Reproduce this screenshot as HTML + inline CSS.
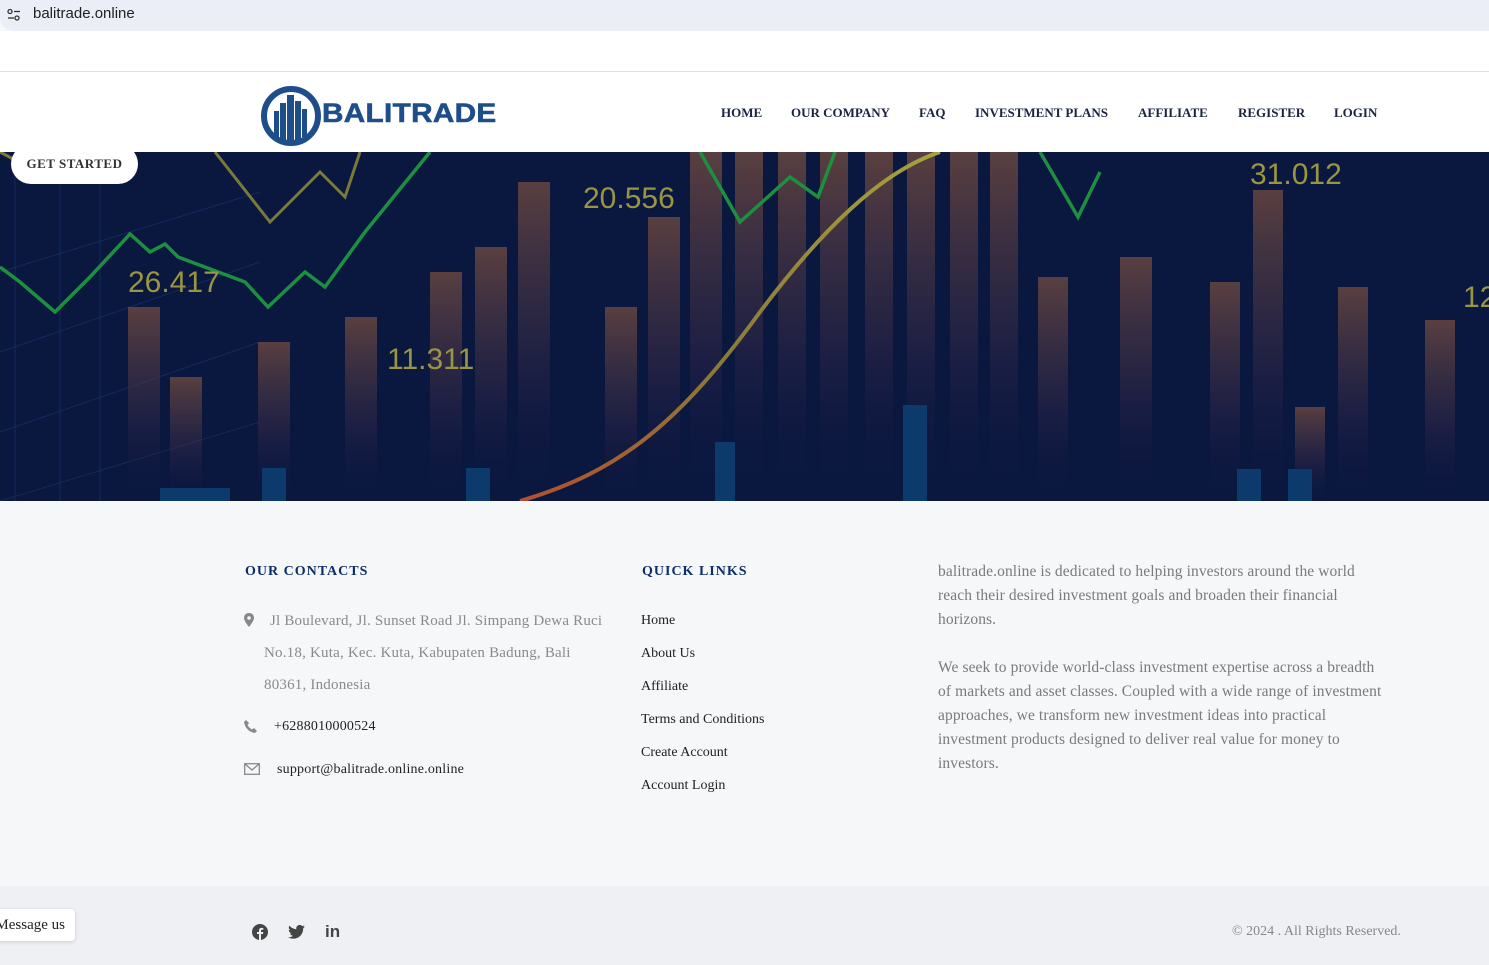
<!DOCTYPE html>
<html><head><meta charset="utf-8"><style>
*{margin:0;padding:0;box-sizing:border-box}
body{width:1489px;height:965px;overflow:hidden;background:#f6f7f9;font-family:"Liberation Serif",serif;position:relative}
.url{position:absolute;left:0;top:0;width:1489px;height:31px;background:#ebeef6;border-radius:0 0 0 14px}
.url span{position:absolute;left:33px;top:5px;font:15px "Liberation Sans",sans-serif;color:#1f1f1f}
.top{position:absolute;top:31px;left:0;width:1489px;height:41px;background:#fff;border-bottom:1px solid #e0e0e0}
header{position:absolute;top:72px;left:0;width:1489px;height:80px;background:#fff}
nav a{position:absolute;top:33px;font-size:13px;font-weight:bold;color:#1a2341;letter-spacing:0;text-decoration:none}
.hero{position:absolute;top:152px;left:0;width:1489px;height:349px;background:#0a173f;overflow:hidden}
.btn{position:absolute;left:11px;top:144px;width:127px;height:40px;background:#fff;border-radius:20px;font-size:13px;font-weight:bold;color:#333;text-align:center;line-height:40px;letter-spacing:.5px;z-index:3}
h4{position:absolute;font-size:14px;font-weight:bold;color:#0d2d6b;letter-spacing:1px}
.t{position:absolute;font-size:15px;color:#8a8a8a;line-height:32px;letter-spacing:.2px}
.d{color:#222;font-size:14px}
.ql{position:absolute;left:641px;font-size:14px;color:#222}
.p{position:absolute;left:938px;width:445px;font-size:15.5px;color:#7a7a7a;line-height:24px;letter-spacing:.1px}
.bot{position:absolute;top:886px;left:0;width:1489px;height:79px;background:#eef0f4}
</style></head><body>
<div class="url"><svg style="position:absolute;left:6px;top:7px" width="16" height="16" viewBox="0 0 16 16" fill="none" stroke="#333" stroke-width="1.3"><circle cx="4" cy="4.5" r="2"/><line x1="8" y1="4.5" x2="14" y2="4.5"/><circle cx="11" cy="11" r="2"/><line x1="2" y1="11" x2="8" y2="11"/></svg><span>balitrade.online</span></div>
<div class="top"></div>
<header>
<svg style="position:absolute;left:260px;top:13px" width="62" height="62" viewBox="0 0 62 62"><circle cx="31" cy="31" r="27" fill="none" stroke="#1d4e8a" stroke-width="6"/><g fill="#1d4e8a"><rect x="14" y="26" width="5" height="26"/><rect x="20" y="18" width="6" height="38"/><rect x="27" y="10" width="7" height="46"/><rect x="35" y="16" width="6" height="40"/><rect x="42" y="24" width="5" height="28"/></g></svg>
<div style="position:absolute;left:322px;top:26px;font:900 27px 'Liberation Sans',sans-serif;color:#1d4e8a;letter-spacing:.3px;transform:scaleX(1.1);transform-origin:left;-webkit-text-stroke:.6px #1d4e8a">BALITRADE</div>
<nav><a style="left:721px">HOME</a><a style="left:791px">OUR COMPANY</a><a style="left:919px">FAQ</a><a style="left:975px">INVESTMENT PLANS</a><a style="left:1138px">AFFILIATE</a><a style="left:1238px">REGISTER</a><a style="left:1334px">LOGIN</a></nav>
</header>
<div class="btn">GET STARTED</div>
<div class="hero">
<svg width="1489" height="349" viewBox="0 0 1489 349">
<defs><linearGradient id="o" x1="0" y1="0" x2="0" y2="1"><stop offset="0" stop-color="#9a6040" stop-opacity=".55"/><stop offset=".6" stop-color="#33284a" stop-opacity=".4"/><stop offset="1" stop-color="#0a173f" stop-opacity="0"/></linearGradient>
<linearGradient id="c" x1="0" y1="1" x2="1" y2="0"><stop offset="0" stop-color="#b05030"/><stop offset=".45" stop-color="#8a7a3a"/><stop offset="1" stop-color="#a8a040"/></linearGradient></defs>
<g stroke="#1a3f7a" stroke-width="1" opacity=".5"><path d="M0 120L260 40M0 200L260 110M0 280L260 190M0 349L260 270"/><path d="M15 0V349M60 0V349M100 0V349"/></g>
<g fill="url(#o)">
<rect x="128" y="155" width="32" height="200"/><rect x="170" y="225" width="32" height="130"/><rect x="258" y="190" width="32" height="165"/><rect x="345" y="165" width="32" height="190"/><rect x="430" y="120" width="32" height="235"/><rect x="475" y="95" width="32" height="260"/><rect x="518" y="30" width="32" height="325"/><rect x="605" y="155" width="32" height="200"/><rect x="648" y="65" width="32" height="290"/><rect x="690" y="0" width="32" height="355"/><rect x="735" y="0" width="28" height="355"/><rect x="778" y="0" width="28" height="355"/><rect x="820" y="0" width="28" height="355"/><rect x="865" y="0" width="28" height="355"/><rect x="907" y="0" width="28" height="355"/><rect x="950" y="0" width="28" height="355"/><rect x="990" y="0" width="28" height="355"/><rect x="1120" y="105" width="32" height="250"/><rect x="1253" y="38" width="30" height="320"/><rect x="1038" y="125" width="30" height="230"/><rect x="1210" y="130" width="30" height="225"/><rect x="1338" y="135" width="30" height="220"/><rect x="1295" y="255" width="30" height="100"/><rect x="1425" y="168" width="30" height="190"/></g>
<g fill="#0d3a6c"><rect x="262" y="316" width="24" height="40"/><rect x="903" y="253" width="24" height="100"/><rect x="715" y="290" width="20" height="60"/><rect x="466" y="316" width="24" height="40"/><rect x="1237" y="317" width="24" height="40"/><rect x="1288" y="317" width="24" height="40"/><rect x="160" y="336" width="70" height="20"/></g>
<path d="M0 0 L15 8 L35 3 L70 18 L80 0 M80 10 L105 -5" stroke="#7a7a38" stroke-width="3" fill="none"/>
<path d="M215 0 L270 70 L320 20 L345 45 L360 0" stroke="#7a7a38" stroke-width="3" fill="none"/>
<path d="M0 115 L20 130 L55 160 L90 125 L130 82 L150 100 L165 92 L178 105 L245 130 L268 155 L305 120 L325 135 L365 80 L430 0" stroke="#1d9040" stroke-width="3.5" fill="none"/>
<path d="M700 0 L740 70 L790 25 L818 45 L835 0" stroke="#1d9040" stroke-width="3.5" fill="none"/>
<path d="M1040 0 L1078 65 L1100 20" stroke="#1d9040" stroke-width="3.5" fill="none"/>
<path d="M520 349 C620 320 680 270 760 160 C820 80 880 20 940 0" stroke="url(#c)" stroke-width="4" fill="none"/>
<g font-family="Liberation Sans,sans-serif" font-size="30" fill="#999543"><text x="128" y="140">26.417</text><text x="387" y="217">11.311</text><text x="583" y="56">20.556</text><text x="1250" y="32">31.012</text><text x="1463" y="155">12</text></g>
</svg></div>
<h4 style="left:245px;top:564px">OUR CONTACTS</h4>
<svg style="position:absolute;left:244px;top:613px" width="10" height="14" viewBox="0 0 10 14"><path d="M5 0C2 0 0 2 0 5c0 3 5 9 5 9s5-6 5-9C10 2 8 0 5 0z" fill="#888"/><circle cx="5" cy="5" r="1.8" fill="#f6f7f9"/></svg>
<div class="t" style="left:270px;top:605px">Jl Boulevard, Jl. Sunset Road Jl. Simpang Dewa Ruci</div>
<div class="t" style="left:264px;top:637px">No.18, Kuta, Kec. Kuta, Kabupaten Badung, Bali</div>
<div class="t" style="left:264px;top:669px">80361, Indonesia</div>
<svg style="position:absolute;left:244px;top:720px" width="13" height="13" viewBox="0 0 13 13"><path d="M2 0l3 3-1.5 2c1 2 2.5 3.5 4.5 4.5L10 8l3 3-2 2C5 12 1 8 0 2z" fill="#888"/></svg>
<div class="t d" style="left:274px;top:711px">+6288010000524</div>
<svg style="position:absolute;left:244px;top:763px" width="16" height="12" viewBox="0 0 16 12" fill="none" stroke="#888" stroke-width="1.3"><rect x=".7" y=".7" width="14.6" height="10.6"/><path d="M1 1l7 6 7-6"/></svg>
<div class="t d" style="left:277px;top:754px">support@balitrade.online.online</div>
<h4 style="left:642px;top:564px">QUICK LINKS</h4>
<div class="ql" style="top:613px">Home</div><div class="ql" style="top:646px">About Us</div><div class="ql" style="top:679px">Affiliate</div><div class="ql" style="top:712px">Terms and Conditions</div><div class="ql" style="top:745px">Create Account</div><div class="ql" style="top:778px">Account Login</div>
<div class="p" style="top:560px">balitrade.online is dedicated to helping investors around the world reach their desired investment goals and broaden their financial horizons.</div>
<div class="p" style="top:656px">We seek to provide world-class investment expertise across a breadth of markets and asset classes. Coupled with a wide range of investment approaches, we transform new investment ideas into practical investment products designed to deliver real value for money to investors.</div>
<div class="bot">
<svg style="position:absolute;left:252px;top:38px" width="16" height="16" viewBox="0 0 16 16"><circle cx="8" cy="8" r="8" fill="#444"/><path d="M9 16V10h2l.3-2H9V6.8c0-.6.2-1 1-1h1.3V4c-.3 0-1-.1-1.8-.1C7.8 3.9 7 4.9 7 6.5V8H5v2h2v6z" fill="#eef0f4"/></svg>
<svg style="position:absolute;left:288px;top:39px" width="17" height="14" viewBox="0 0 24 20"><path d="M24 2.4a10 10 0 01-2.8.8A5 5 0 0023.3.4a10 10 0 01-3.1 1.2A4.9 4.9 0 0011.8 6 14 14 0 011.7.9a4.9 4.9 0 001.5 6.6 4.9 4.9 0 01-2.2-.6v.1a4.9 4.9 0 003.9 4.8 5 5 0 01-2.2.1 4.9 4.9 0 004.6 3.4A9.9 9.9 0 010 17.3 14 14 0 007.5 19.5c9.1 0 14-7.5 14-14v-.6A10 10 0 0024 2.4z" fill="#444"/></svg>
<div style="position:absolute;left:325px;top:36px;font:bold 17px 'Liberation Sans',sans-serif;color:#444">in</div>
<div style="position:absolute;left:1232px;top:38px;font-size:14px;color:#888">© 2024 . All Rights Reserved.</div>
</div>
<div style="position:absolute;left:-10px;top:909px;width:85px;height:32px;background:#fff;border-radius:4px;box-shadow:0 1px 4px rgba(0,0,0,.15);font-size:15px;color:#222;line-height:32px;text-align:right;padding-right:10px">Message us</div>
</body></html>
